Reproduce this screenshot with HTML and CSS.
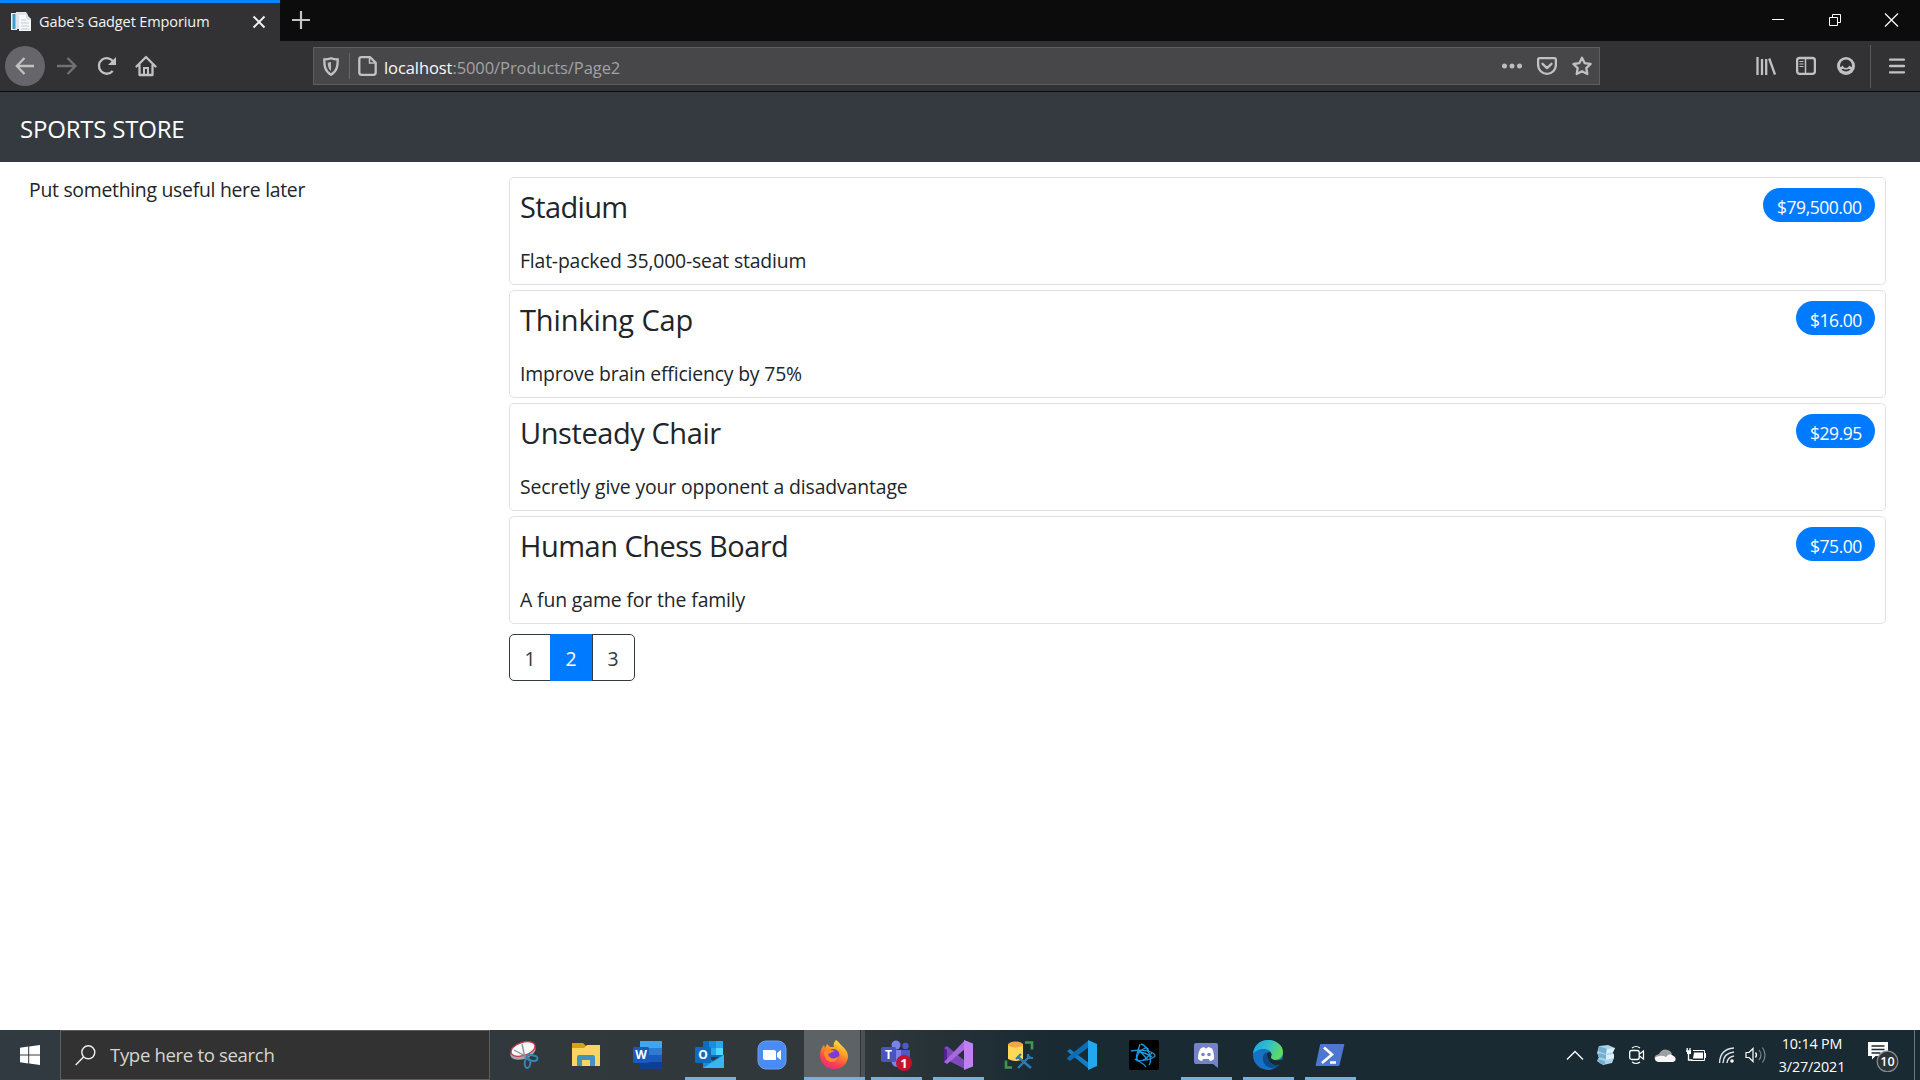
FILE: index.html
```html
<!DOCTYPE html>
<html lang="en">
<head>
<meta charset="utf-8">
<title>Gabe's Gadget Emporium</title>
<link rel="stylesheet" href="styles.css">
</head>
<body>
<div class="screen">
  <header class="tabbar">
    <div class="tab">
      <svg class="favicon" width="22" height="22" viewBox="0 0 22 22"><path d="M1 2h6v17H1z" fill="#eef4f8"/><path d="M2.500 3h3v15h-3z" fill="#3d9bd0"/><path d="M6 1h10l2 3v14H6z" fill="#dfe5ea"/><path d="M9 4h8l4 4v12H9z" fill="#f7f8fa"/><path d="M17 4v4h4M11 9h5M11 12h8M11 15h8M11 18h8" stroke="#c5cbd2" fill="none"/></svg>
      <span class="tab-title">Gabe's Gadget Emporium</span>
      <svg class="tab-close" width="14" height="14" viewBox="0 0 14 14"><path d="M1.500 1.500l11 11M12.500 1.500l-11 11" stroke="#f4f4f5" stroke-width="1.900"/></svg>
    </div>
    <svg class="newtab" width="20" height="20" viewBox="0 0 20 20"><path d="M10 1v18M1 10h18" stroke="#c4c4c5" stroke-width="2.200"/></svg>
    <div class="window-buttons">
      <svg width="57" height="41" viewBox="0 0 57 41"><path d="M23 19.500h12" stroke="#fff"/></svg>
      <svg width="57" height="41" viewBox="0 0 57 41"><path d="M23.500 17.500h8v8h-8zM26.500 17v-2.500h8v8h-3" stroke="#fff" fill="none"/></svg>
      <svg width="57" height="41" viewBox="0 0 57 41"><path d="M22 13.500l13 13M35 13.500l-13 13" stroke="#fff" stroke-width="1.200"/></svg>
    </div>
  </header>

  <nav class="toolbar">
    <div class="back"><svg width="20" height="18" viewBox="0 0 20 18"><path d="M19 9H2M9.500 1L1.800 9l7.700 8" class="ln"/></svg></div>
    <svg class="forward" width="22" height="18" viewBox="0 0 22 18"><path d="M1 9h17M11.500 1l8 8-8 8" class="ln dim"/></svg>
    <svg class="reload" width="22" height="22" viewBox="0 0 22 22"><path d="M16.700 16A7.800 7.800 0 1 1 17.500 7" class="ln"/><path d="M20 2v8h-8z" fill="#c1c1c2"/></svg>
    <svg class="home" width="22" height="22" viewBox="0 0 22 22"><path d="M1.500 11.500L11 2l9.500 9.500M4.500 10v10h13V10" class="ln round"/><path d="M9 20v-7h4v7" class="ln w2"/></svg>
    <div class="urlbar">
      <svg class="shield" width="16" height="19" viewBox="0 0 16 19"><path d="M8 1.200c2.500 1 4.500 1.200 6.700 1.200 0 6-.2 11.600-6.700 15.400C1.500 14 1.300 8.400 1.300 2.400 3.500 2.400 5.500 2.200 8 1.200z" class="ln"/><path d="M8 5v9c-2.500-2-3.200-4.500-3.300-8.300z" fill="#bababb"/></svg>
      <span class="url-sep"></span>
      <svg class="doc" width="19" height="20" viewBox="0 0 19 20"><path d="M3.500 1.200H12l5.700 5.500v9.800c0 1.500-.8 2.300-2.200 2.300h-12c-1.400 0-2.200-.8-2.200-2.300v-13c0-1.500.8-2.300 2.200-2.300z" class="ln"/><path d="M11.500 1.500V7h6" class="ln w15"/></svg>
      <span class="url"><b>localhost</b>:5000/Products/Page2</span>
      <div class="url-actions">
        <svg width="20" height="20" viewBox="0 0 20 20"><path d="M0 10a2.400 2.400 0 1 0 5 0a2.400 2.400 0 1 0-5 0M7.500 10a2.400 2.400 0 1 0 5 0a2.400 2.400 0 1 0-5 0M15 10a2.400 2.400 0 1 0 5 0a2.400 2.400 0 1 0-5 0" fill="#bdbdbe"/></svg>
        <svg width="20" height="20" viewBox="0 0 20 20"><path d="M2.500 2.200h15q1.400 0 1.400 1.400V9a8.900 8.900 0 0 1-17.800 0V3.600q0-1.400 1.400-1.400z" class="ln"/><path d="M5.500 7.800l4.500 4.300 4.500-4.300" class="ln round"/></svg>
        <svg width="20" height="20" viewBox="0 0 20 20"><path d="M10 1.800l2.600 5.300 6 .9-4.300 4.100 1 5.900-5.300-2.800L4.700 18l1-5.900L1.400 8l6-.9z" class="ln round"/></svg>
      </div>
    </div>
    <div class="tools">
      <svg width="20" height="20" viewBox="0 0 20 20"><path d="M1.500 1v18M6 3v16M10.200 3v16M13.200 2.500L19 18.500" class="ln"/></svg>
      <svg width="20" height="20" viewBox="0 0 20 20"><rect x="1.100" y="2" width="17.800" height="15.800" rx="2.500" class="ln"/><path d="M9.500 2v16" class="ln w15"/><path d="M3.500 5.500h4M3.500 8h4M3.500 10.500h4" class="ln w1"/></svg>
      <svg width="20" height="20" viewBox="0 0 20 20"><circle cx="10" cy="10" r="9" fill="#c1c1c2"/><path d="M4 9.500a6 6 0 0 1 12 0q0 1-.6 1.800Q14 10 13.500 9.500 12 12 10 12T6.500 9.500Q6 10 4.600 11.300 4 10.500 4 9.500z" fill="#323234"/><path d="M5.500 13.500q1-.800 2-.600 2.500 1 5 0 1-.200 2 .600-4.500 4-9 0z" fill="#323234"/></svg>
    </div>
    <span class="menu-sep"></span>
    <svg class="menu" width="16" height="16" viewBox="0 0 16 16"><path d="M1 1.600h14M1 8h14M1 14.300h14" class="ln round"/></svg>
  </nav>

  <div class="brandbar"><span class="brand">SPORTS STORE</span></div>

  <main class="content">
    <aside class="side">Put something useful here later</aside>
    <section class="products">
      <article class="card stadium"><div class="card-head"><h4>Stadium</h4><span class="badge">$79,500.00</span></div><p>Flat-packed 35,000-seat stadium</p></article>
      <article class="card cap"><div class="card-head"><h4>Thinking Cap</h4><span class="badge short">$16.00</span></div><p>Improve brain efficiency by 75%</p></article>
      <article class="card chair"><div class="card-head"><h4>Unsteady Chair</h4><span class="badge short">$29.95</span></div><p>Secretly give your opponent a disadvantage</p></article>
      <article class="card chess"><div class="card-head"><h4>Human Chess Board</h4><span class="badge short">$75.00</span></div><p>A fun game for the family</p></article>
      <div class="pager"><a>1</a><a class="active">2</a><a>3</a></div>
    </section>
  </main>

  <footer class="taskbar">
    <div class="start"><svg width="20" height="20" viewBox="0 0 20 20"><path d="M0 2.700L8.200 1.600v7.900H0zM9.200 1.400L20 0v9.500H9.200zM0 10.500h8.200v7.900L0 17.300zM9.200 10.500H20V20L9.200 18.600z" fill="#fff"/></svg></div>
    <div class="search">
      <svg width="21" height="21" viewBox="0 0 21 21"><circle cx="13.300" cy="7.300" r="6.500" fill="none" stroke="#eee" stroke-width="1.400"/><path d="M8.500 12L.7 20" stroke="#eee" stroke-width="1.500"/></svg>
      <span class="search-text">Type here to search</span>
    </div>
    <div class="apps">
      <div class="app"><svg width="30" height="30" viewBox="0 0 30 30"><ellipse cx="14" cy="12" rx="13" ry="7" transform="rotate(-18 14 12)" fill="#a5a8ac"/><ellipse cx="14" cy="9" rx="12.500" ry="6.500" transform="rotate(-18 14 9)" fill="#f8f8f8" stroke="#c93846" stroke-width="1.300"/><path d="M13 4l3 14M5 10l13 7" stroke="#8b9299" stroke-width="1.400"/><ellipse cx="23" cy="18" rx="5.500" ry="2.700" transform="rotate(10 23 18)" fill="none" stroke="#3784b5" stroke-width="2"/><ellipse cx="18.500" cy="23" rx="2.800" ry="5" transform="rotate(5 18.500 23)" fill="none" stroke="#3784b5" stroke-width="2"/></svg></div>
      <div class="app"><svg width="30" height="30" viewBox="0 0 30 30"><path d="M1 3h11l3 3v5H1z" fill="#d9a010"/><path d="M1 8h12l3-3h13v21H1z" fill="#fbd466"/><path d="M6 26V17q0-2 2-2h14q2 0 2 2v9h-5v-6h-8v6z" fill="#4691c3"/></svg></div>
      <div class="app"><svg class="left" width="30" height="30" viewBox="0 0 30 30"><path d="M8 1h22v7H8z" fill="#41a5ee"/><path d="M8 8h22v7H8z" fill="#2b7cd3"/><path d="M8 15h22v7H8z" fill="#185abd"/><path d="M8 22h22v7H8z" fill="#103f91"/><rect x="1" y="7" width="16" height="16" rx="1.500" fill="#185abd"/><text x="9" y="19" text-anchor="middle" class="glyph">W</text></svg></div>
      <div class="app run"><svg width="30" height="30" viewBox="0 0 30 30"><path d="M8 1h20v16H8z" fill="#0f6cbd"/><path d="M14 1h7v7h-7z" fill="#1490df"/><path d="M21 1h7v7h-7z" fill="#28a8ea"/><path d="M14 8h7v7h-7z" fill="#28a8ea"/><path d="M21 8h7v7h-7z" fill="#50d9ff"/><path d="M8 14l10 7 11-7v14H8z" fill="#1a8bd8"/><path d="M8 28l21-13v13z" fill="#35b8f1"/><rect x="0" y="7" width="16" height="16" rx="1.500" fill="#0f6cbd"/><text x="8" y="19" text-anchor="middle" class="glyph">O</text></svg></div>
      <div class="app"><svg width="30" height="30" viewBox="0 0 30 30"><rect x="1" y="1" width="28" height="28" rx="8" fill="#4a8cf6" stroke="#6f9ee6"/><path d="M6 10h11q2 0 2 2v8H8q-2 0-2-2zM20 13l4-3v10l-4-3z" fill="#fff"/></svg></div>
      <div class="app run focus"><svg width="30" height="30" viewBox="0 0 30 30"><defs><linearGradient id="ff" x1=".8" y1="0" x2=".3" y2="1"><stop offset="0" stop-color="#fff04a"/><stop offset=".4" stop-color="#ff9a1f"/><stop offset=".75" stop-color="#ff4050"/><stop offset="1" stop-color="#e42b82"/></linearGradient></defs><path d="M17 0c3 2 4 4 6 6 5 4 7 9 5.500 13.500C27 25 22 29 15.500 29 7 29 1 23 1 15.500 1 11 3 7 5 5l1 3 2-4 3 3h4c-1-3 0-5 2-7z" fill="url(#ff)"/><circle cx="14.500" cy="15" r="6" fill="#7a3fd1"/><path d="M5 12c4-3 7-2 11-1-3 1-4 2-7 3 1 5 7 6 11 2-1 6-9 8-13 3-1-2-2-4-2-7z" fill="#ff8b24"/></svg></div>
      <div class="app run"><svg width="34" height="32" viewBox="0 0 34 32"><circle cx="17" cy="6" r="4.500" fill="#7b83eb"/><circle cx="26.500" cy="7" r="3.200" fill="#5059c9"/><path d="M12 11h13v10q-2 7-7 7t-6-7z" fill="#7b83eb"/><path d="M22 11h9v7q-1 5-5 5l-4-1z" fill="#5059c9"/><rect x="2" y="8" width="15" height="15" rx="1.500" fill="#4b53bc"/><text x="9.500" y="20" text-anchor="middle" class="glyph">T</text><circle cx="25" cy="24" r="8" fill="#c4122f"/><text x="25" y="29" text-anchor="middle" class="glyph one">1</text></svg></div>
      <div class="app run"><svg width="30" height="30" viewBox="0 0 30 30"><path d="M1 8l3-2 18 15v8L4 20z" fill="#7f49ba"/><path d="M1 22V8l3 2v10z" fill="#52218a"/><path d="M1 22l3 2L22 9V0L4 19z" fill="#a767df"/><path d="M21 0l9 3.500v23L21 30z" fill="#bd82f0"/></svg></div>
      <div class="app"><svg class="left" width="30" height="30" viewBox="0 0 30 30"><path d="M4 4h15v15q-7 4-15 0z" fill="#ffd954"/><ellipse cx="11.500" cy="4.500" rx="7.500" ry="3" fill="#f4a742"/><path d="M21 2.500h7v7M2 20.500v7h6" fill="none" stroke="#409750" stroke-width="2.600"/><path d="M14 17l13 11M26 16L14 28" stroke="#2d7ab3" stroke-width="2.400" fill="none"/><path d="M12 19l5-5M24 14v4h5" stroke="#2d7ab3" stroke-width="2.200" fill="none"/></svg></div>
      <div class="app"><svg width="30" height="30" viewBox="0 0 30 30"><path d="M0 11l3-2 19 14v6L1 12z" fill="#157dc1"/><path d="M0 19l3 2L22 7V0L1 17z" fill="#0e6cb4"/><path d="M21 0l9 4v22l-9 4z" fill="#23a7ef"/></svg></div>
      <div class="app"><svg width="30" height="30" viewBox="0 0 30 30"><rect width="30" height="30" rx="2" fill="#000"/><g fill="none" stroke="#209bdb" stroke-width="1.300"><path d="M2 11q12-2 20 1 6 3 3 5-4 3-11 3"/><path d="M12 4q5 1 8 9 3 9 0 12"/><path d="M17 27q-2-3-6-5-5-3-3-8l3-10"/><path d="M7 20q2-9 9-12 4-1 3 4"/><path d="M10 10l9 10M6 19q4 4 10 0l7-6M9 12q7 0 14 5"/></g></svg></div>
      <div class="app run"><svg width="30" height="30" viewBox="0 0 30 30"><path d="M5 3h20q2 0 2 2v23l-5-4H5q-2 0-2-2V5q0-2 2-2z" fill="#7482c8"/><path d="M7 19c0-5 1-8 2.500-10.500Q12 7 13 7l1 1.200h2L17 7q3 .5 4 1.500C22.500 11 23 14 23 19q-2 2-4 2l-1.300-2h-5.400L11 21q-2 0-4-2z" fill="#fff"/><circle cx="12" cy="14.500" r="1.800" fill="#7482c8"/><circle cx="18" cy="14.500" r="1.800" fill="#7482c8"/></svg></div>
      <div class="app run"><svg width="30" height="30" viewBox="0 0 30 30"><defs><linearGradient id="eg" x1="0" y1=".3" x2="1" y2=".6"><stop offset="0" stop-color="#1fa5e4"/><stop offset=".5" stop-color="#35c1c4"/><stop offset="1" stop-color="#67df52"/></linearGradient></defs><circle cx="15" cy="15" r="15" fill="#1572c5"/><path d="M0 14C1 5 7 0 15 0c9 0 15 6 15 12 0 5-4 8-8 8-3 0-5-1-4-3 2-4-1-8-7-8-5 0-9 2-11 5z" fill="url(#eg)"/><path d="M13 12c-5 4-4 12 2 15 4 2 9 1 12-3-7 3-13-2-13-9z" fill="#0c4d91"/><path d="M14 13q4-3 4.500 2-2 4 3 5 4 1 9-1v3l-2 2q-7 3-12-2-3-4-2.500-9z" fill="#192a33"/></svg></div>
      <div class="app run"><svg width="30" height="30" viewBox="0 0 30 30"><path d="M6 4h22.500q1 0 .8 1L24.500 25q-.2 1-1.200 1H1.500q-1 0-.8-1L5 5q.2-1 1-1z" fill="#4d77d1"/><path d="M9 7.500l8 7L7 23M15 22.500h6" fill="none" stroke="#fff" stroke-width="2.600"/></svg></div>
    </div>
    <div class="tray">
      <svg width="18" height="12" viewBox="0 0 18 12"><path d="M1 10.500l8-8 8 8" fill="none" stroke="#fff" stroke-width="1.300"/></svg>
      <svg class="cube" width="20" height="20" viewBox="0 0 20 20"><path d="M3 1l9-1 7 3-2 4 1 6-2 5-9 2-6-4 2-4-2-4z" fill="#a9d4e8"/><path d="M3 1l8 3-1 5-8-3zM3 8l7 2v4l-8-2zM2 14l7 2v4l-6-2z" fill="#74afd0"/><path d="M11 4l8-1-2 4-7 2zM10 10l8-1v4l-8 2z" fill="#dceef6"/></svg>
      <svg class="meet" width="16" height="20" viewBox="0 0 16 20"><rect x=".7" y="5.500" width="9.500" height="9" rx="2" fill="none" stroke="#fff" stroke-width="1.300"/><path d="M10.500 9l4-3v8l-4-3M3 3q4-3 8 0M3 17q4 3 8 0" fill="none" stroke="#fff" stroke-width="1.200"/></svg>
      <svg class="cloud" width="22" height="14" viewBox="0 0 22 14"><path d="M2 13q-4-5 3-7 3-6 9-4 3 1 4 4l-8 7z" fill="#9b9fa2"/><path d="M2 13q-3-4 3-5 4-1 7 1 3-4 6-2l3 2q2 4-2 5H4z" fill="#f7f7f7"/></svg>
      <svg class="batt" width="20" height="14" viewBox="0 0 20 14"><path d="M0 3h5M1.200 0v3M4 0v3M2.500 4v8h4" stroke="#fff" stroke-width="1.300" fill="none"/><path d="M1 3h4v3H1zM8 4.500h9v6H7z" fill="#fff"/><path d="M7 2.500h11.500v10H5M19.500 5v5" fill="none" stroke="#fff"/></svg>
      <svg class="wifi" width="18" height="18" viewBox="0 0 18 18"><path d="M1.500 17Q2 3 16 2M5 17q.5-10 11-11M9 17q.5-6 7-7" fill="none" stroke="#dfe3e5" stroke-width="1.400"/><circle cx="14" cy="15" r="1.800" fill="#fff"/></svg>
      <svg class="vol" width="22" height="18" viewBox="0 0 22 18"><path d="M1 6.500h3l4-4v13l-4-4H1z" fill="none" stroke="#fff" stroke-width="1.200"/><path d="M10.500 6.500q2 2.500 0 5" fill="none" stroke="#fff" stroke-width="1.300"/><path d="M14 4q4 5 0 10M17.500 1.500q5 7.500 0 15" fill="none" stroke="#7d878c" stroke-width="1.200"/></svg>
    </div>
    <div class="clock"><span>10:14 PM</span><span>3/27/2021</span></div>
    <div class="notify"><svg width="34" height="34" viewBox="0 0 34 34"><path d="M1 4h20v14H8.500L5 21.500V18H1z" fill="#fff"/><path d="M4.500 8h13M4.500 11.500h13M4.500 15h9" stroke="#192a33" stroke-width="1.300"/><circle cx="20.500" cy="23.500" r="10.300" fill="#2c3438" stroke="#858b8e" stroke-width="1.200"/><text x="20.500" y="28" text-anchor="middle" class="glyph ten">10</text></svg></div>
    <span class="peek"></span>
  </footer>
</div>
</body>
</html>
```
FILE: styles.css
```css
* { box-sizing: border-box; }
body { margin: 0; background: #fff; font-family: "Open Sans", "Noto Sans", sans-serif; color: #212529; }
svg { display: block; flex: none; }
.screen { width: 1920px; height: 1080px; display: flex; flex-direction: column; overflow: hidden; white-space: nowrap; }

/* toolbar icon strokes */
.ln { fill: none; stroke: #c1c1c2; stroke-width: 2.3; }
.round { stroke-linecap: round; stroke-linejoin: round; }
.w1 { stroke-width: 1; }
.w15 { stroke-width: 1.5; }
.w2 { stroke-width: 2; }
.dim { stroke: #717173; }

.tabbar { height: 41px; flex: none; background: #0c0c0d; display: flex; align-items: center; }
.tab { width: 280px; height: 41px; background: #323234; border-top: 3px solid #0a84ff; display: flex; align-items: center; padding-left: 10px; }
.tab-title { font-size: 14.5px; line-height: 20px; letter-spacing: -.11px; color: #f4f4f5; margin-left: 7px; flex: 1; }
.tab-close { margin-right: 14px; margin-top: -1px; }
.newtab { margin-left: 11px; margin-top: -1px; }
.window-buttons { margin-left: auto; display: flex; }

.toolbar { height: 51px; flex: none; background: #323234; border-bottom: 1px solid #0c0c0d; display: flex; align-items: center; padding-left: 5px; }
.back { width: 40px; height: 40px; border-radius: 50%; background: #66666a; display: flex; align-items: center; justify-content: center; }
.forward { margin-left: 11px; }
.reload { margin-left: 18px; }
.home { margin-left: 17px; }
.urlbar { width: 1287px; height: 38px; margin-left: 156px; background: #474749; border: 1px solid #5e5e60; display: flex; align-items: center; padding-left: 9px; }
.url-sep { width: 1px; height: 26px; background: #68686a; margin: 0 8px 0 10px; }
.url { font-size: 16.5px; line-height: 24px; letter-spacing: -.08px; color: #a2a2a4; margin: 4px 0 0 7px; }
.url b { font-weight: 400; color: #f9f9fa; }
.url-actions { margin-left: auto; display: flex; gap: 15px; margin-right: 7px; }
.tools { display: flex; gap: 20px; margin-left: 156px; }
.menu-sep { width: 1px; height: 43px; background: #5a5a5c; margin: 0 18px 0 14px; }

.brandbar { height: 70px; flex: none; background: #343a40; display: flex; align-items: center; padding-left: 20px; }
.brand { color: #fff; font-size: 24px; line-height: 34px; letter-spacing: -.2px; margin-top: 3px; }

.content { flex: 1; display: flex; min-height: 0; }
.side { width: 509px; padding: 12px 0 0 29px; font-size: 19.4px; line-height: 31px; letter-spacing: -.28px; }
.products { width: 1377px; padding-top: 15px; }
.card { height: 108px; border: 1px solid #dee2e6; border-radius: 5px; margin-bottom: 5px; padding: 10px; }
.card-head { display: flex; justify-content: space-between; height: 44px; }
.card h4 { margin: 0; font-weight: 400; font-size: 29px; line-height: 38px; }
.card p { margin: 14px 0 0; font-size: 19.4px; line-height: 30px; }
.stadium h4 { letter-spacing: -.65px; }
.cap h4 { letter-spacing: -.12px; }
.chair h4 { letter-spacing: -.42px; }
.chess h4 { letter-spacing: -.5px; }
.stadium p, .cap p { letter-spacing: -.18px; }
.chair p, .chess p { letter-spacing: -.13px; }
.badge { width: 112px; height: 34px; border-radius: 17px; background: #007bff; color: #fff; font-size: 17.5px; line-height: 38px; letter-spacing: -.46px; padding-left: 14px; }
.short { width: 79px; }
.pager { margin-top: 10px; width: 126px; height: 47px; display: flex; border: 1px solid #343a40; border-radius: 5px; font-size: 19.4px; line-height: 48px; text-align: center; color: #343a40; }
.pager a { width: 40px; }
.pager .active { width: 43px; background: #007bff; color: #fff; margin: -1px 0; border-right: 1px solid #343a40; line-height: 50px; }

.taskbar { height: 50px; flex: none; display: flex; background: linear-gradient(90deg, #303a40 0, #31383b 850px, #192a33 1050px, #192a33 100%); }
.start { width: 60px; display: flex; align-items: center; justify-content: center; }
.search { width: 430px; background: #323232; border: 1px solid #5c5f60; display: flex; align-items: center; padding-left: 14px; }
.search-text { color: #d5d5d5; font-size: 18.6px; line-height: 28px; letter-spacing: -.35px; margin: 0 0 1px 14px; }
.apps { display: flex; padding-left: 3px; }
.app { width: 62px; height: 50px; display: flex; align-items: center; justify-content: center; position: relative; }
.app svg { margin-right: 1px; }
.app .left { margin-right: 3px; }
.run::after { content: ""; position: absolute; left: 6px; bottom: 0; width: 51px; height: 3px; background: #76b0e3; }
.focus { background: linear-gradient(90deg, transparent 1px, #5d6265 1px, #5d6265 57px, #303638 57px, #303638 58px, #4b5154 58px); }
.focus::after { left: 1px; width: 61px; }
.glyph { font: 700 12px "Open Sans", sans-serif; fill: #fff; }
.one { font-size: 13px; }
.ten { font-size: 12.5px; font-weight: 600; }
.tray { display: flex; align-items: center; margin-left: 205px; }
.cube { margin-left: 12px; }
.meet { margin-left: 13px; }
.cloud { margin-left: 9px; }
.batt { margin-left: 10px; }
.wifi { margin-left: 12px; }
.vol { margin-left: 9px; }
.clock { display: flex; flex-direction: column; align-items: center; margin-left: 10px; width: 70px; color: #fff; font-size: 14.3px; line-height: 23px; letter-spacing: -.15px; padding-top: 2px; }
.notify { margin: 8px 0 0 20px; }
.peek { width: 1px; background: #6b777d; margin-left: auto; margin-right: 5px; }
```
